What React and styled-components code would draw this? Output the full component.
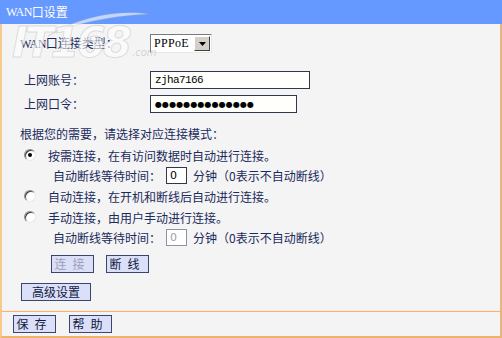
import React from "react";
import styled, { createGlobalStyle } from "styled-components";

const Global = createGlobalStyle`
  html, body { margin: 0; padding: 0; background: #f4f4f4; }
  body { font-family: "Noto Sans CJK SC", "Noto Sans", sans-serif; font-size: 12px; color: #1b2a5c; }
  * { box-sizing: border-box; }
`;

const Frame = styled.div`
  position: relative;
  width: 502px;
  height: 338px;
  display: flex;
  flex-direction: column;
  background: #f4f4f4;
  overflow: hidden;
`;

const Header = styled.div`
  height: 24px;
  background: #6699ff;
  color: #ffffff;
  padding-left: 6px;
  line-height: 24px;
  font-size: 12px;
  display: flex;
  align-items: center;
`;

const Latin = styled.span`
  font-family: "Liberation Serif", "DejaVu Serif", serif;
  font-size: 12px;
  letter-spacing: -0.5px;
`;

const Body = styled.div`
  flex: 1;
  display: flex;
  flex-direction: column;
  border-left: 2px solid #f6c98c;
  border-right: 2px solid #e7b57f;
`;

const FieldRow = styled.div`
  display: grid;
  grid-template-columns: ${(p) => p.$labelWidth}px auto;
  align-items: center;
  padding-left: ${(p) => p.$indent}px;
  margin-top: ${(p) => p.$top}px;
  height: 18px;
`;

const Label = styled.span`
  white-space: nowrap;
  line-height: 18px;
`;

const SelectBox = styled.div`
  width: 62px;
  height: 19px;
  display: flex;
  border: 1px solid #7a7a7a;
  border-right-color: #e8e8e8;
  border-bottom-color: #e8e8e8;
  background: #ffffff;
`;

const SelectValue = styled.div`
  flex: 1;
  font-family: "Liberation Serif", "DejaVu Serif", serif;
  font-size: 12px;
  color: #000;
  padding-left: 3px;
  line-height: 17px;
  letter-spacing: 0.3px;
`;

const SelectArrow = styled.div`
  width: 16px;
  margin: 1px;
  background: #d4d0c8;
  border: 1px solid #ffffff;
  border-right-color: #404040;
  border-bottom-color: #404040;
  display: flex;
  align-items: center;
  justify-content: center;
`;

const TextBox = styled.div`
  width: ${(p) => p.$w}px;
  height: 18px;
  border: 1px solid #2e3650;
  background: #fffffb;
  display: flex;
  align-items: center;
  padding-left: 4px;
  font-family: "Liberation Mono", "DejaVu Sans Mono", monospace;
  font-size: 11px;
  letter-spacing: -0.6px;
  color: #000;
`;

const Dots = styled.span`
  font-family: "DejaVu Sans", sans-serif;
  font-size: 8px;
  letter-spacing: 0.1px;
  color: #000;
`;

const ModeTitle = styled.div`
  margin-top: 13px;
  padding-left: 18px;
  height: 16px;
  line-height: 16px;
`;

const OptionRow = styled.div`
  display: flex;
  align-items: center;
  height: 20px;
  margin-top: ${(p) => p.$top}px;
  padding-left: 22px;
  gap: ${(p) => p.$gap}px;
  white-space: nowrap;
`;

const Radio = styled.span`
  width: 12px;
  height: 12px;
  border-radius: 50%;
  background: #ffffff;
  border: 1px solid #8a8a8a;
  border-right-color: #e8e8e8;
  border-bottom-color: #e8e8e8;
  box-shadow: inset 1px 1px 0 #404040;
  display: flex;
  align-items: center;
  justify-content: center;
  flex: none;
  &::after {
    content: "";
    width: 4px;
    height: 4px;
    border-radius: 50%;
    background: ${(p) => (p.$checked ? "#000" : "transparent")};
  }
`;

const WaitRow = styled.div`
  display: flex;
  align-items: center;
  height: 20px;
  padding-left: 51px;
  white-space: nowrap;
`;

const SmallInput = styled.div`
  width: 21px;
  height: 17px;
  margin-left: 5px;
  margin-right: 6px;
  border: 1px solid #2e3650;
  background: #ffffff;
  padding-left: 3px;
  line-height: 15px;
  font-family: "DejaVu Sans", sans-serif;
  font-size: 11px;
  color: ${(p) => (p.$disabled ? "#a0a0a0" : "#000")};
  border-color: ${(p) => (p.$disabled ? "#8c92a8" : "#2e3650")};
`;

const Note = styled.span`
  margin-left: 0px;
`;

const ButtonRow = styled.div`
  display: flex;
  gap: ${(p) => p.$gap}px;
  padding-left: ${(p) => p.$indent}px;
  margin-top: ${(p) => p.$top}px;
`;

const Btn = styled.div`
  width: ${(p) => p.$w}px;
  height: 18px;
  background: #dcdff8;
  border: 1px solid #3c4470;
  display: flex;
  align-items: center;
  justify-content: center;
  font-size: 12px;
  line-height: 16px;
  color: ${(p) => (p.$disabled ? "#9da0b8" : "#0e1a40")};
  letter-spacing: ${(p) => p.$spacing || 0}px;
  white-space: nowrap;
`;

const Divider = styled.div`
  margin-top: auto;
  height: 2px;
  border-top: 1px solid #fde6ec;
  border-bottom: 1px solid #f0b66a;
`;

const Footer = styled.div`
  height: 26px;
  display: flex;
  align-items: center;
  gap: 13px;
  padding-left: 11px;
  border-left: 2px solid #f6c98c;
  border-right: 2px solid #e7b57f;
  border-bottom: 2px solid #eeb36a;
`;

const Watermark = styled.div`
  position: absolute;
  left: 12px;
  top: 25px;
  pointer-events: none;
  display: flex;
  align-items: flex-end;
`;

const MarkText = styled.span`
  font-family: "DejaVu Sans", sans-serif;
  font-style: italic;
  font-weight: bold;
  font-size: 42px;
  line-height: 36px;
  color: rgba(255, 255, 255, 0.6);
  -webkit-text-stroke: 1px rgba(150, 150, 150, 0.3);
  letter-spacing: -3px;
`;

const MarkCom = styled.span`
  font-family: "DejaVu Sans", sans-serif;
  font-style: italic;
  font-size: 10px;
  line-height: 12px;
  color: rgba(180, 180, 180, 0.55);
  margin-bottom: 2px;
  margin-left: 3px;
`;

const Swoosh = styled.svg`
  position: absolute;
  left: 30px;
  top: 10px;
  pointer-events: none;
`;

export default function App() {
  return (
    <>
      <Global />
      <Frame>
        <Header>
          <Latin>WAN</Latin>口设置
        </Header>
        <Body>
          <FieldRow $labelWidth={130} $indent={18} $top={10}>
            <Label>
              <Latin>WAN</Latin>口连接类型：
            </Label>
            <SelectBox>
              <SelectValue>PPPoE</SelectValue>
              <SelectArrow>
                <svg width="7" height="4" viewBox="0 0 7 4">
                  <path d="M0 0h7L3.5 4z" fill="#000" />
                </svg>
              </SelectArrow>
            </SelectBox>
          </FieldRow>
          <FieldRow $labelWidth={126} $indent={22} $top={19}>
            <Label>上网账号：</Label>
            <TextBox $w={160}>zjha7166</TextBox>
          </FieldRow>
          <FieldRow $labelWidth={126} $indent={22} $top={6}>
            <Label>上网口令：</Label>
            <TextBox $w={147}>
              <Dots>●●●●●●●●●●●●●●</Dots>
            </TextBox>
          </FieldRow>

          <ModeTitle>根据您的需要，请选择对应连接模式：</ModeTitle>
          <OptionRow $top={3} $gap={12}>
            <Radio $checked />
            <span>按需连接，在有访问数据时自动进行连接。</span>
          </OptionRow>
          <WaitRow>
            自动断线等待时间：
            <SmallInput>0</SmallInput>
            分钟
            <Note>（0表示不自动断线）</Note>
          </WaitRow>
          <OptionRow $top={1} $gap={12}>
            <Radio />
            <span>自动连接，在开机和断线后自动进行连接。</span>
          </OptionRow>
          <OptionRow $top={1} $gap={12}>
            <Radio />
            <span>手动连接，由用户手动进行连接。</span>
          </OptionRow>
          <WaitRow>
            自动断线等待时间：
            <SmallInput $disabled>0</SmallInput>
            分钟
            <Note>（0表示不自动断线）</Note>
          </WaitRow>
          <ButtonRow $indent={49} $gap={12} $top={8}>
            <Btn $w={43} $disabled $spacing={6}>连接</Btn>
            <Btn $w={43} $spacing={6}>断线</Btn>
          </ButtonRow>
          <ButtonRow $indent={19} $gap={0} $top={10}>
            <Btn $w={70}>高级设置</Btn>
          </ButtonRow>
          <Divider />
        </Body>
        <Footer>
          <Btn $w={43} $spacing={6}>保存</Btn>
          <Btn $w={43} $spacing={6}>帮助</Btn>
        </Footer>
        <Swoosh width="120" height="40" viewBox="0 0 120 40">
          <path
            d="M118 4 C90 0 50 6 18 26 C40 14 80 6 118 4 Z"
            fill="rgba(255,255,255,0.6)"
            stroke="rgba(170,170,170,0.3)"
            strokeWidth="1"
          />
        </Swoosh>
        <Watermark>
          <MarkText>IT168</MarkText>
          <MarkCom>.com</MarkCom>
        </Watermark>
      </Frame>
    </>
  );
}
